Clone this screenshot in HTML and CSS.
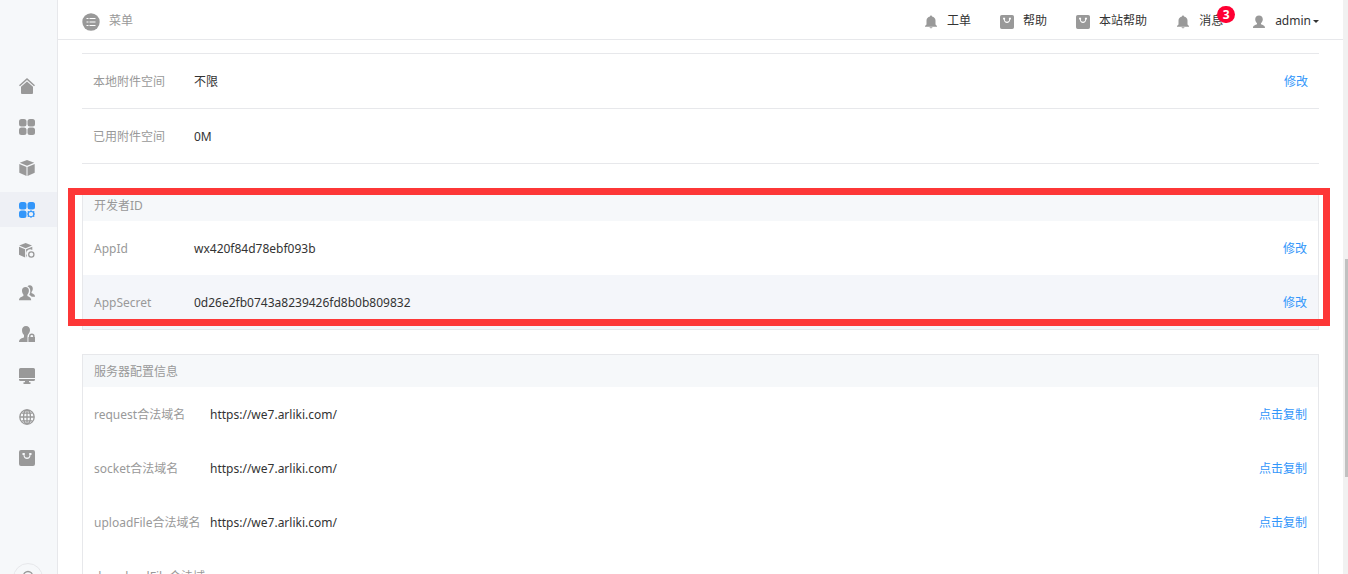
FILE: index.html
```html
<!DOCTYPE html>
<html lang="zh-CN">
<head>
    <meta charset="UTF-8">
    <meta name="viewport" content="width=device-width, initial-scale=1.0">
    <title>开发者设置</title>
    <link rel="stylesheet" href="styles.css">
</head>
<body>
    <!-- shared icons -->
    <svg class="sprite" aria-hidden="true">
        <symbol id="bell" viewBox="0 0 16 16">
            <path d="M8 1.500c.6 0 1 .4 1 1 2.100.5 3.500 2 3.500 4v4L14 12v.8H2V12l1.500-1.500v-4c0-2 1.400-3.500 3.500-4 0-.6.4-1 1-1z"/>
            <path d="M6.200 13.200h3.600L8 14.600z"/>
        </symbol>
        <symbol id="bag" viewBox="0 0 16 16">
            <path fill-rule="evenodd" d="M2 0h12a2 2 0 0 1 2 2v12a2 2 0 0 1-2 2H2a2 2 0 0 1-2-2V2a2 2 0 0 1 2-2zM3.500 3v2h1c0 2.500 1.500 4 3.500 4s3.500-1.500 3.500-4h1V3h-2.300v2h.3c0 1.600-1 2.600-2.500 2.600S5.500 6.600 5.500 5h.3V3z"/>
        </symbol>
        <symbol id="user" viewBox="0 0 16 16">
            <path d="M8 1.500c2.300 0 3.800 1.500 3.800 3.800 0 1.600-.9 3.200-1.800 4v1c1.500.9 4 .9 4 3.700H2c0-2.800 2.500-2.800 4-3.700v-1c-.9-.8-1.800-2.400-1.800-4C4.200 3 5.700 1.500 8 1.500z"/>
        </symbol>
        <symbol id="cube" viewBox="0 0 16 16">
            <path d="M8 0l7.200 2.800L8 5.700.8 2.800z"/>
            <path d="M.3 4l7.200 2.900V16L.3 12.800z"/>
            <path d="M15.700 4L8.500 6.900V16l7.200-3.200z"/>
        </symbol>
    </svg>

    <aside class="sidebar">
        <ul class="side-menu">
            <li><a href="#" aria-label="首页">
                <svg viewBox="0 0 16 16"><path d="M8 0l8 7.200-1 1.100-7-6.200-7 6.200-1-1.100z"/><path d="M8 3.400l6 5.300V15a1 1 0 0 1-1 1H3a1 1 0 0 1-1-1V8.700z"/></svg>
            </a></li>
            <li><a href="#" aria-label="平台">
                <svg viewBox="0 0 16 16"><rect width="7.500" height="7.500" rx="2.500"/><rect x="8.500" width="7.500" height="7.500" rx="2.500"/><rect y="8.500" width="7.500" height="7.500" rx="2.500"/><rect x="8.500" y="8.500" width="7.500" height="7.500" rx="2.500"/></svg>
            </a></li>
            <li><a href="#" aria-label="应用"><svg><use href="#cube"/></svg></a></li>
            <li><a href="#" class="active" aria-label="平台管理">
                <svg viewBox="0 0 16 16"><rect width="7.500" height="7.500" rx="2.500"/><rect x="8.500" width="7.500" height="7.500" rx="2.500"/><rect y="8.500" width="7.500" height="7.500" rx="2.500"/><path fill-rule="evenodd" d="M12 8l1.300 1.300 2-.2v2l.7 1-.7 1v1.900l-2-.2L12 16l-1.300-1.200-2 .2v-1.900l-.7-1 .7-1v-2l2 .2zM12 9.900a2.200 2.200 0 1 0 0 4.400 2.200 2.200 0 0 0 0-4.400z"/></svg>
            </a></li>
            <li><a href="#" aria-label="应用管理">
                <svg viewBox="0 0 16 16"><path d="M6.600 0l6.400 2.600-6.400 2.600L.2 2.600z"/><path d="M0 3.700l6.100 2.500v8.300L0 11.700z"/><path d="M13.300 3.700v3.200a4 4 0 0 0-5.400 5.600L7.100 14.500V6.200z"/><circle class="ring" cx="12.300" cy="11.500" r="2.600"/></svg>
            </a></li>
            <li><a href="#" aria-label="用户">
                <svg viewBox="0 0 16 16"><path d="M10.700.3c2 0 3.100 1.300 3.100 3.200 0 1.400-.5 2.700-1.300 3.500v1c1 .8 3.500 1 3.500 3.800h-3.300c-.5-1-1.500-1.500-2.500-1.900.7-1 1.100-2.500 1.100-3.900 0-2.400-1.200-4-2.800-4.500.5-.8 1.300-1.200 2.200-1.200z"/><path d="M6.500 2c2.100 0 3.400 1.400 3.400 3.500 0 1.600-.6 3-1.500 3.900V11c1.200.9 3.800 1.100 3.800 4.300H0c0-3.200 3-3.400 4.400-4.300V9.400C3.600 8.500 3 7.100 3 5.500 3 3.400 4.400 2 6.500 2z"/></svg>
            </a></li>
            <li><a href="#" aria-label="权限">
                <svg viewBox="0 0 16 16"><path d="M7 0c2.500 0 4 1.700 4 4 0 1.500-.6 2.900-1.400 3.800-.7.700-1.100 1.500-1.100 2.400V16H0c0-3.400 3.200-3.700 5-4.800V9C3.700 8 3 6 3 4c0-2.300 1.500-4 4-4z"/><path fill-rule="evenodd" d="M10 11v-.8a2.800 2.800 0 0 1 5.600 0v.8h.4v5H9.400v-5zm1.500 0h2.600v-.8a1.300 1.300 0 0 0-2.600 0z"/></svg>
            </a></li>
            <li><a href="#" aria-label="系统">
                <svg viewBox="0 0 16 16"><path d="M1.500 0h13A1.500 1.500 0 0 1 16 1.500V10H0V1.500A1.500 1.500 0 0 1 1.500 0z"/><path d="M0 11h16v.5a1.500 1.500 0 0 1-1.500 1.500H10v1.200h1.500V16h-7v-1.800H6V13H1.500A1.500 1.500 0 0 1 0 11.500z"/></svg>
            </a></li>
            <li><a href="#" aria-label="站点">
                <svg viewBox="0 0 16 16"><g class="ring"><circle cx="8" cy="8" r="7.200"/><ellipse cx="8" cy="8" rx="3.500" ry="7.200"/><path d="M8 1v14M1 8h14M2.500 4.200h11M2.500 11.800h11"/></g></svg>
            </a></li>
            <li><a href="#" aria-label="商城"><svg><use href="#bag"/></svg></a></li>
        </ul>
        <button type="button" class="side-search" aria-label="搜索">
            <svg viewBox="0 0 16 16"><g class="ring"><circle cx="8" cy="6" r="4.500"/><path d="M11 10l3 4"/></g></svg>
        </button>
    </aside>

    <div class="page">
        <header class="topbar">
            <a href="#" class="menu-link">
                <svg viewBox="0 0 18 18"><circle cx="9" cy="9" r="8.700"/><path class="lines" d="M4.500 5.500h2M7.500 5.500h6M4.500 9h2M7.500 9h6M4.500 12.500h2M7.500 12.500h6"/></svg>
                菜单
            </a>
            <nav class="top-nav">
                <a href="#"><svg><use href="#bell"/></svg>工单</a>
                <a href="#"><svg class="small"><use href="#bag"/></svg>帮助</a>
                <a href="#"><svg class="small"><use href="#bag"/></svg>本站帮助</a>
                <a href="#"><svg><use href="#bell"/></svg>消息<span class="badge">3</span></a>
                <a href="#"><svg><use href="#user"/></svg><span class="account">admin</span></a>
            </nav>
        </header>

        <main class="content">
            <table class="info-table">
                <tr>
                    <th scope="row">本地附件空间</th>
                    <td>不限</td>
                    <td class="action"><a href="#">修改</a></td>
                </tr>
                <tr>
                    <th scope="row">已用附件空间</th>
                    <td>0M</td>
                    <td class="action"></td>
                </tr>
            </table>

            <section class="marked">
                <div class="panel">
                    <h2>开发者ID</h2>
                    <table>
                        <tr>
                            <th scope="row">AppId</th>
                            <td>wx420f84d78ebf093b</td>
                            <td class="action"><a href="#">修改</a></td>
                        </tr>
                        <tr class="hover">
                            <th scope="row">AppSecret</th>
                            <td>0d26e2fb0743a8239426fd8b0b809832</td>
                            <td class="action"><a href="#">修改</a></td>
                        </tr>
                    </table>
                </div>
            </section>

            <section class="panel">
                <h2>服务器配置信息</h2>
                <table class="server-table">
                    <tr>
                        <th scope="row">request合法域名</th>
                        <td>https://we7.arliki.com/</td>
                        <td class="action"><a href="#">点击复制</a></td>
                    </tr>
                    <tr>
                        <th scope="row">socket合法域名</th>
                        <td>https://we7.arliki.com/</td>
                        <td class="action"><a href="#">点击复制</a></td>
                    </tr>
                    <tr>
                        <th scope="row">uploadFile合法域名</th>
                        <td>https://we7.arliki.com/</td>
                        <td class="action"><a href="#">点击复制</a></td>
                    </tr>
                    <tr>
                        <th scope="row">downloadFile合法域名</th>
                        <td>https://we7.arliki.com/</td>
                        <td class="action"><a href="#">点击复制</a></td>
                    </tr>
                </table>
            </section>
        </main>
    </div>

    <div class="scrollbar" aria-hidden="true"><div class="thumb"></div></div>
</body>
</html>
```
FILE: styles.css
```css
* {
    box-sizing: border-box;
}
body {
    margin: 0;
    height: 100vh;
    display: flex;
    overflow: hidden;
    font-family: "Noto Sans", "Noto Sans CJK SC", sans-serif;
    font-size: 12px;
    line-height: 18px;
    color: #333;
    background-color: #fff;
}
a {
    color: #3296fa;
    text-decoration: none;
}
svg {
    display: block;
    width: 16px;
    height: 16px;
    fill: #999;
}
.sprite {
    position: absolute;
    width: 0;
    height: 0;
}
.ring {
    fill: none;
    stroke: #999;
    stroke-width: 1.3;
}

/* Sidebar */
.sidebar {
    flex: none;
    width: 58px;
    overflow: hidden;
    background-color: #f6f8fa;
    border-right: 1px solid #e7e8eb;
}
.side-menu {
    list-style: none;
    margin: 0;
    padding: 0;
    margin-top: 68px;
    height: 408px;
    display: flex;
    flex-direction: column;
    justify-content: space-between;
}
.side-menu a {
    display: flex;
    height: 35px;
    padding-right: 3px;
    align-items: center;
    justify-content: center;
}
.side-menu a.active {
    background-color: #eef0f5;
}
.side-menu .active svg {
    fill: #3296fa;
}
.side-search {
    display: flex;
    justify-content: center;
    align-items: center;
    width: 30px;
    height: 30px;
    margin: 87px 0 0 13px;
    padding: 0;
    border: 1px solid #e7e8eb;
    border-radius: 50%;
    background-color: #f6f8fa;
}

/* Top bar */
.page {
    flex: 1;
    min-width: 0;
    display: flex;
    flex-direction: column;
}
.topbar {
    flex: none;
    height: 40px;
    display: flex;
    justify-content: space-between;
    align-items: center;
    padding: 2px 24px 0;
    border-bottom: 1px solid #e7e8eb;
}
.topbar a {
    display: flex;
    align-items: center;
    gap: 8px;
    color: #333;
}
.topbar a svg {
    margin-top: 2px;
}
.topbar .menu-link {
    gap: 9px;
    color: #999;
}
.topbar .menu-link svg {
    width: 18px;
    height: 18px;
}
.lines {
    stroke: #fff;
    stroke-width: 1.2;
}
.top-nav {
    display: flex;
    gap: 28px;
}
.top-nav a {
    position: relative;
}
.top-nav .small {
    width: 14px;
    height: 14px;
    margin-left: 1px;
    margin-right: 1px;
}
.badge {
    position: absolute;
    top: -6px;
    right: -12px;
    width: 18px;
    height: 17px;
    border-radius: 9px;
    background-color: #ff0033;
    color: #fff;
    font-weight: bold;
    line-height: 17px;
    text-align: center;
}
.account::after {
    content: "";
    display: inline-block;
    margin-left: 2px;
    vertical-align: middle;
    border: 3px solid transparent;
    border-top-color: #333;
    border-bottom: 0;
}

/* Content */
.content {
    flex: 1;
    min-height: 0;
    overflow: hidden;
    padding: 13px 24px 0;
}
table {
    width: 100%;
    border-collapse: collapse;
}
th, td {
    padding: 19px 0 17px;
    text-align: left;
    font-weight: normal;
    vertical-align: middle;
}
th {
    width: 111px;
    padding-left: 11px;
    color: #999;
}
td.action {
    padding-right: 11px;
    text-align: right;
}
.info-table {
    margin-bottom: 24px;
}
.info-table th {
    width: 112px;
}
.info-table tr {
    border-top: 1px solid #e7e8eb;
    border-bottom: 1px solid #e7e8eb;
}
.panel {
    border: 1px solid #e7e8eb;
    margin-bottom: 24px;
}
.panel h2 {
    margin: 0;
    padding: 8px 11px 6px;
    background-color: #f6f8fa;
    color: #999;
    font-size: 12px;
    font-weight: normal;
}
.hover {
    background-color: #f4f6fa;
}
.server-table th {
    width: 127px;
}

/* Red frame drawn over the developer panel */
.marked {
    position: relative;
}
.marked::after {
    content: "";
    position: absolute;
    top: 0;
    right: -11px;
    bottom: 4px;
    left: -14px;
    border: 7px solid #fd3737;
    pointer-events: none;
}

/* Scrollbar */
.scrollbar {
    flex: none;
    display: flex;
    flex-direction: column;
    align-items: flex-end;
    width: 5px;
    padding-top: 259px;
    background-color: #f1f1f1;
}
.thumb {
    width: 3px;
    height: 38vh;
    background-color: #c1c1c1;
}
```
